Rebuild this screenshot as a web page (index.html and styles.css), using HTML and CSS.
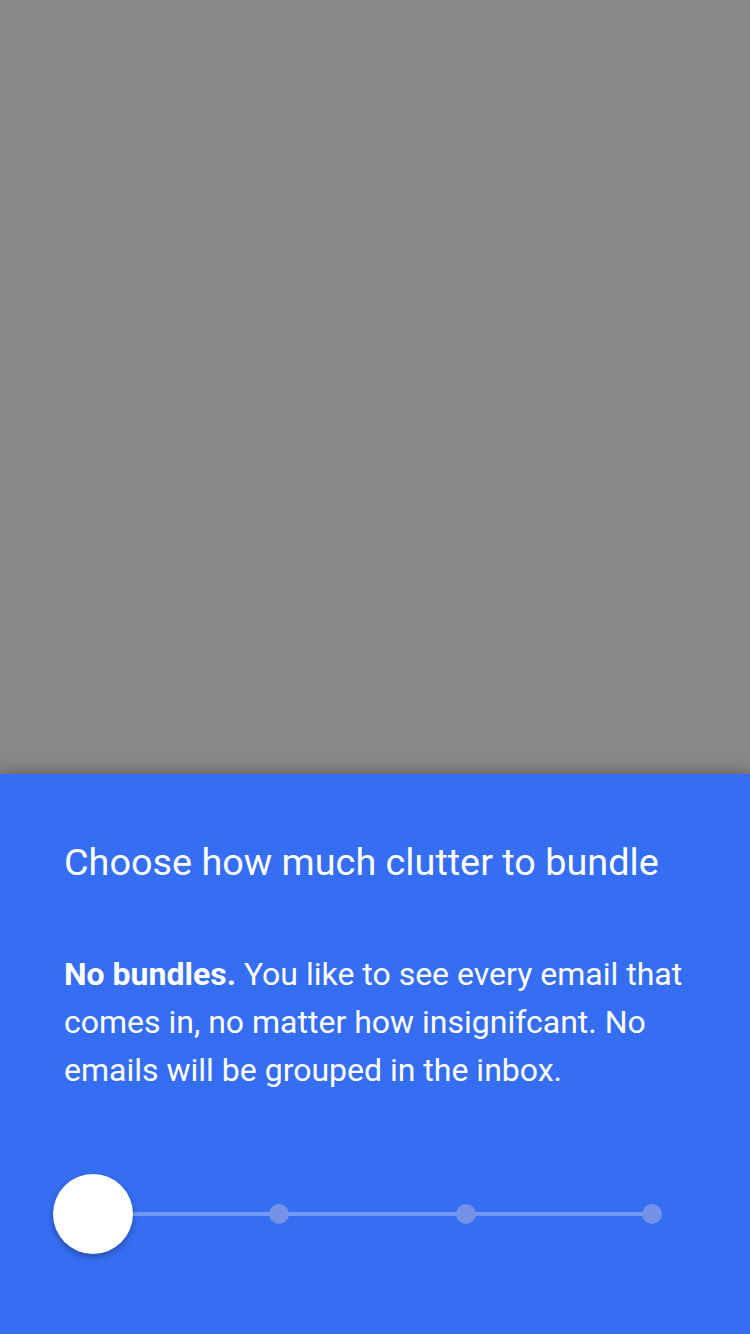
FILE: index.html
```html
<!DOCTYPE html>
<html>
<head>
<meta charset="utf-8">
<link rel="stylesheet" href="styles.css">
</head>
<body>
<div class="screen">
  <div class="scrim"></div>
  <div class="sheet">
    <h1 class="title">Choose how much clutter to bundle</h1>
    <p class="desc"><b>No bundles.</b> You like to see every email that comes in, no matter how insignifcant. No emails will be grouped in the inbox.</p>
    <div class="slider">
      <div class="track"></div>
      <div class="stops">
        <span class="stop"><span class="thumb"></span></span>
        <span class="stop"><span class="dot"></span></span>
        <span class="stop"><span class="dot"></span></span>
        <span class="stop"><span class="dot"></span></span>
      </div>
    </div>
  </div>
</div>
</body>
</html>
```
FILE: styles.css
```css
* { box-sizing: border-box; }
html, body { margin: 0; padding: 0; }
body { width: 750px; height: 1334px; overflow: hidden; font-family: Roboto, "Liberation Sans", sans-serif; }
.screen { display: flex; flex-direction: column; height: 1334px; }
.scrim { height: 774px; background: #888888; flex: none; }
.sheet {
  flex: 1;
  background: #356ef2;
  color: #ffffff;
  padding: 0 64px;
  box-shadow: 0 -2px 14px rgba(0,0,0,0.3);
  position: relative;
}
.title {
  margin: 0;
  padding-top: 64px;
  font-size: 37.8px;
  font-weight: 400;
  line-height: 48px;
  white-space: nowrap;
}
.desc {
  margin: 0;
  padding-top: 64px;
  font-size: 32px;
  line-height: 48px;
  font-weight: 400;
  width: 640px;
}
.desc b { font-weight: 700; }
.slider {
  position: relative;
  margin-top: 80px;
  margin-left: 29px;
  width: 559px;
  height: 80px;
}
.track {
  position: absolute;
  left: 0;
  right: 0;
  top: 38px;
  height: 4px;
  background: rgba(255,255,255,0.3);
}
.stops {
  position: relative;
  display: flex;
  align-items: center;
  justify-content: space-between;
  height: 80px;
}
.stop {
  width: 0;
  display: flex;
  justify-content: center;
  align-items: center;
}
.thumb {
  flex: none;
  width: 80px; height: 80px; border-radius: 50%;
  background: #fff;
  box-shadow: 0 3px 6px rgba(0,0,0,0.3);
}
.dot {
  flex: none;
  width: 20px; height: 20px; border-radius: 50%;
  background: #7493e6;
}
```
